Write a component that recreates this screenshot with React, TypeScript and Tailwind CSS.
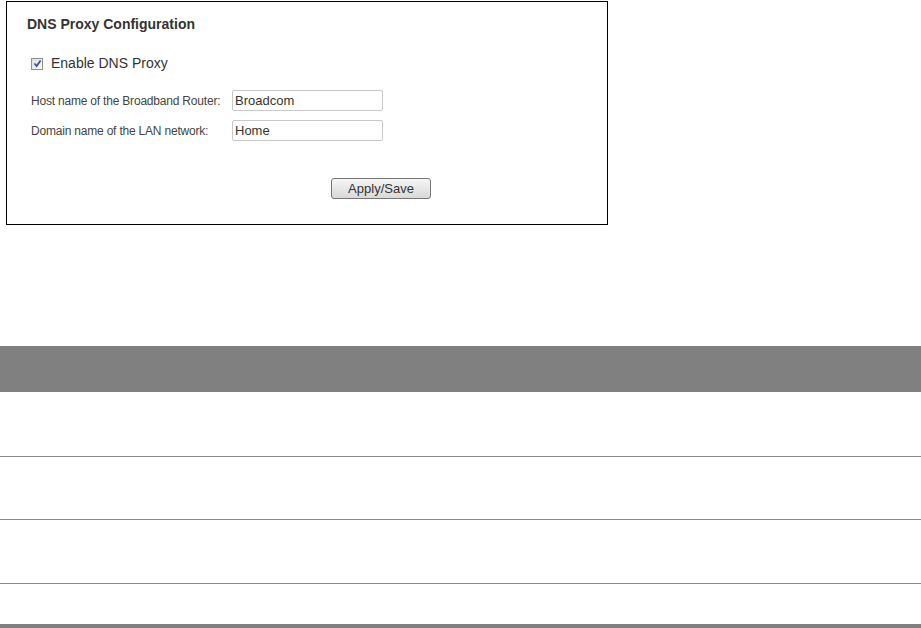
export default function App() {
    const rows = ["h-[65px]", "h-[63px]", "h-[64px]"]

    return (
        <div className="w-[921px] h-[628px] overflow-hidden bg-white font-['Liberation_Sans',Arial,sans-serif]">
            <div className="pl-[6px] pt-[1px]">
                <div className="w-[602px] h-[224px] border border-black px-5 pt-[14px]">
                    <div className="text-[14px] font-bold text-[#333] leading-4">DNS Proxy Configuration</div>
                    <label className="flex items-center gap-[8px] mt-[21px] ml-1 text-[14px] text-[#333]">
                        <span className="w-[12px] h-[12px] border border-[#8e8f8f] bg-gradient-to-br from-[#dcdcdc] to-[#fbfbfb] flex items-center justify-center">
                            <svg width="9" height="9" viewBox="0 0 9 9">
                                <path d="M1.5 4.5 L3.6 7 L7.6 1.5" fill="none" stroke="#3a4f9a" strokeWidth="1.7" />
                            </svg>
                        </span>
                        <span>Enable DNS Proxy</span>
                    </label>
                    <div className="mt-[16px] ml-1 flex flex-col gap-[9px] text-[12px] text-[#444]">
                        <div className="flex items-center">
                            <span className="w-[201px] tracking-[-0.2px]">Host name of the Broadband Router:</span>
                            <input
                                defaultValue="Broadcom"
                                className="w-[151px] h-[21px] border border-[#c8c8c8] rounded-[2px] px-[2px] text-[13px] text-[#333] outline-none"
                            />
                        </div>
                        <div className="flex items-center">
                            <span className="w-[201px] tracking-[-0.2px]">Domain name of the LAN network:</span>
                            <input
                                defaultValue="Home"
                                className="w-[151px] h-[21px] border border-[#c8c8c8] rounded-[2px] px-[2px] text-[13px] text-[#333] outline-none"
                            />
                        </div>
                    </div>
                    <div className="mt-[35px] pl-[304px]">
                        <button className="w-[100px] h-[21px] border border-[#777] rounded-[3px] bg-gradient-to-b from-[#f6f6f6] to-[#d8d8d8] text-[13px] text-[#333] leading-none">
                            Apply/Save
                        </button>
                    </div>
                </div>
            </div>

            <div className="mt-[121px] h-[46px] bg-[#808080]" />
            {rows.map((h) => (
                <div key={h} className={`${h} border-b border-[#8a8a8a]`} />
            ))}
            <div className="mt-[40px] h-[4px] bg-[#808080]" />
        </div>
    );
}
